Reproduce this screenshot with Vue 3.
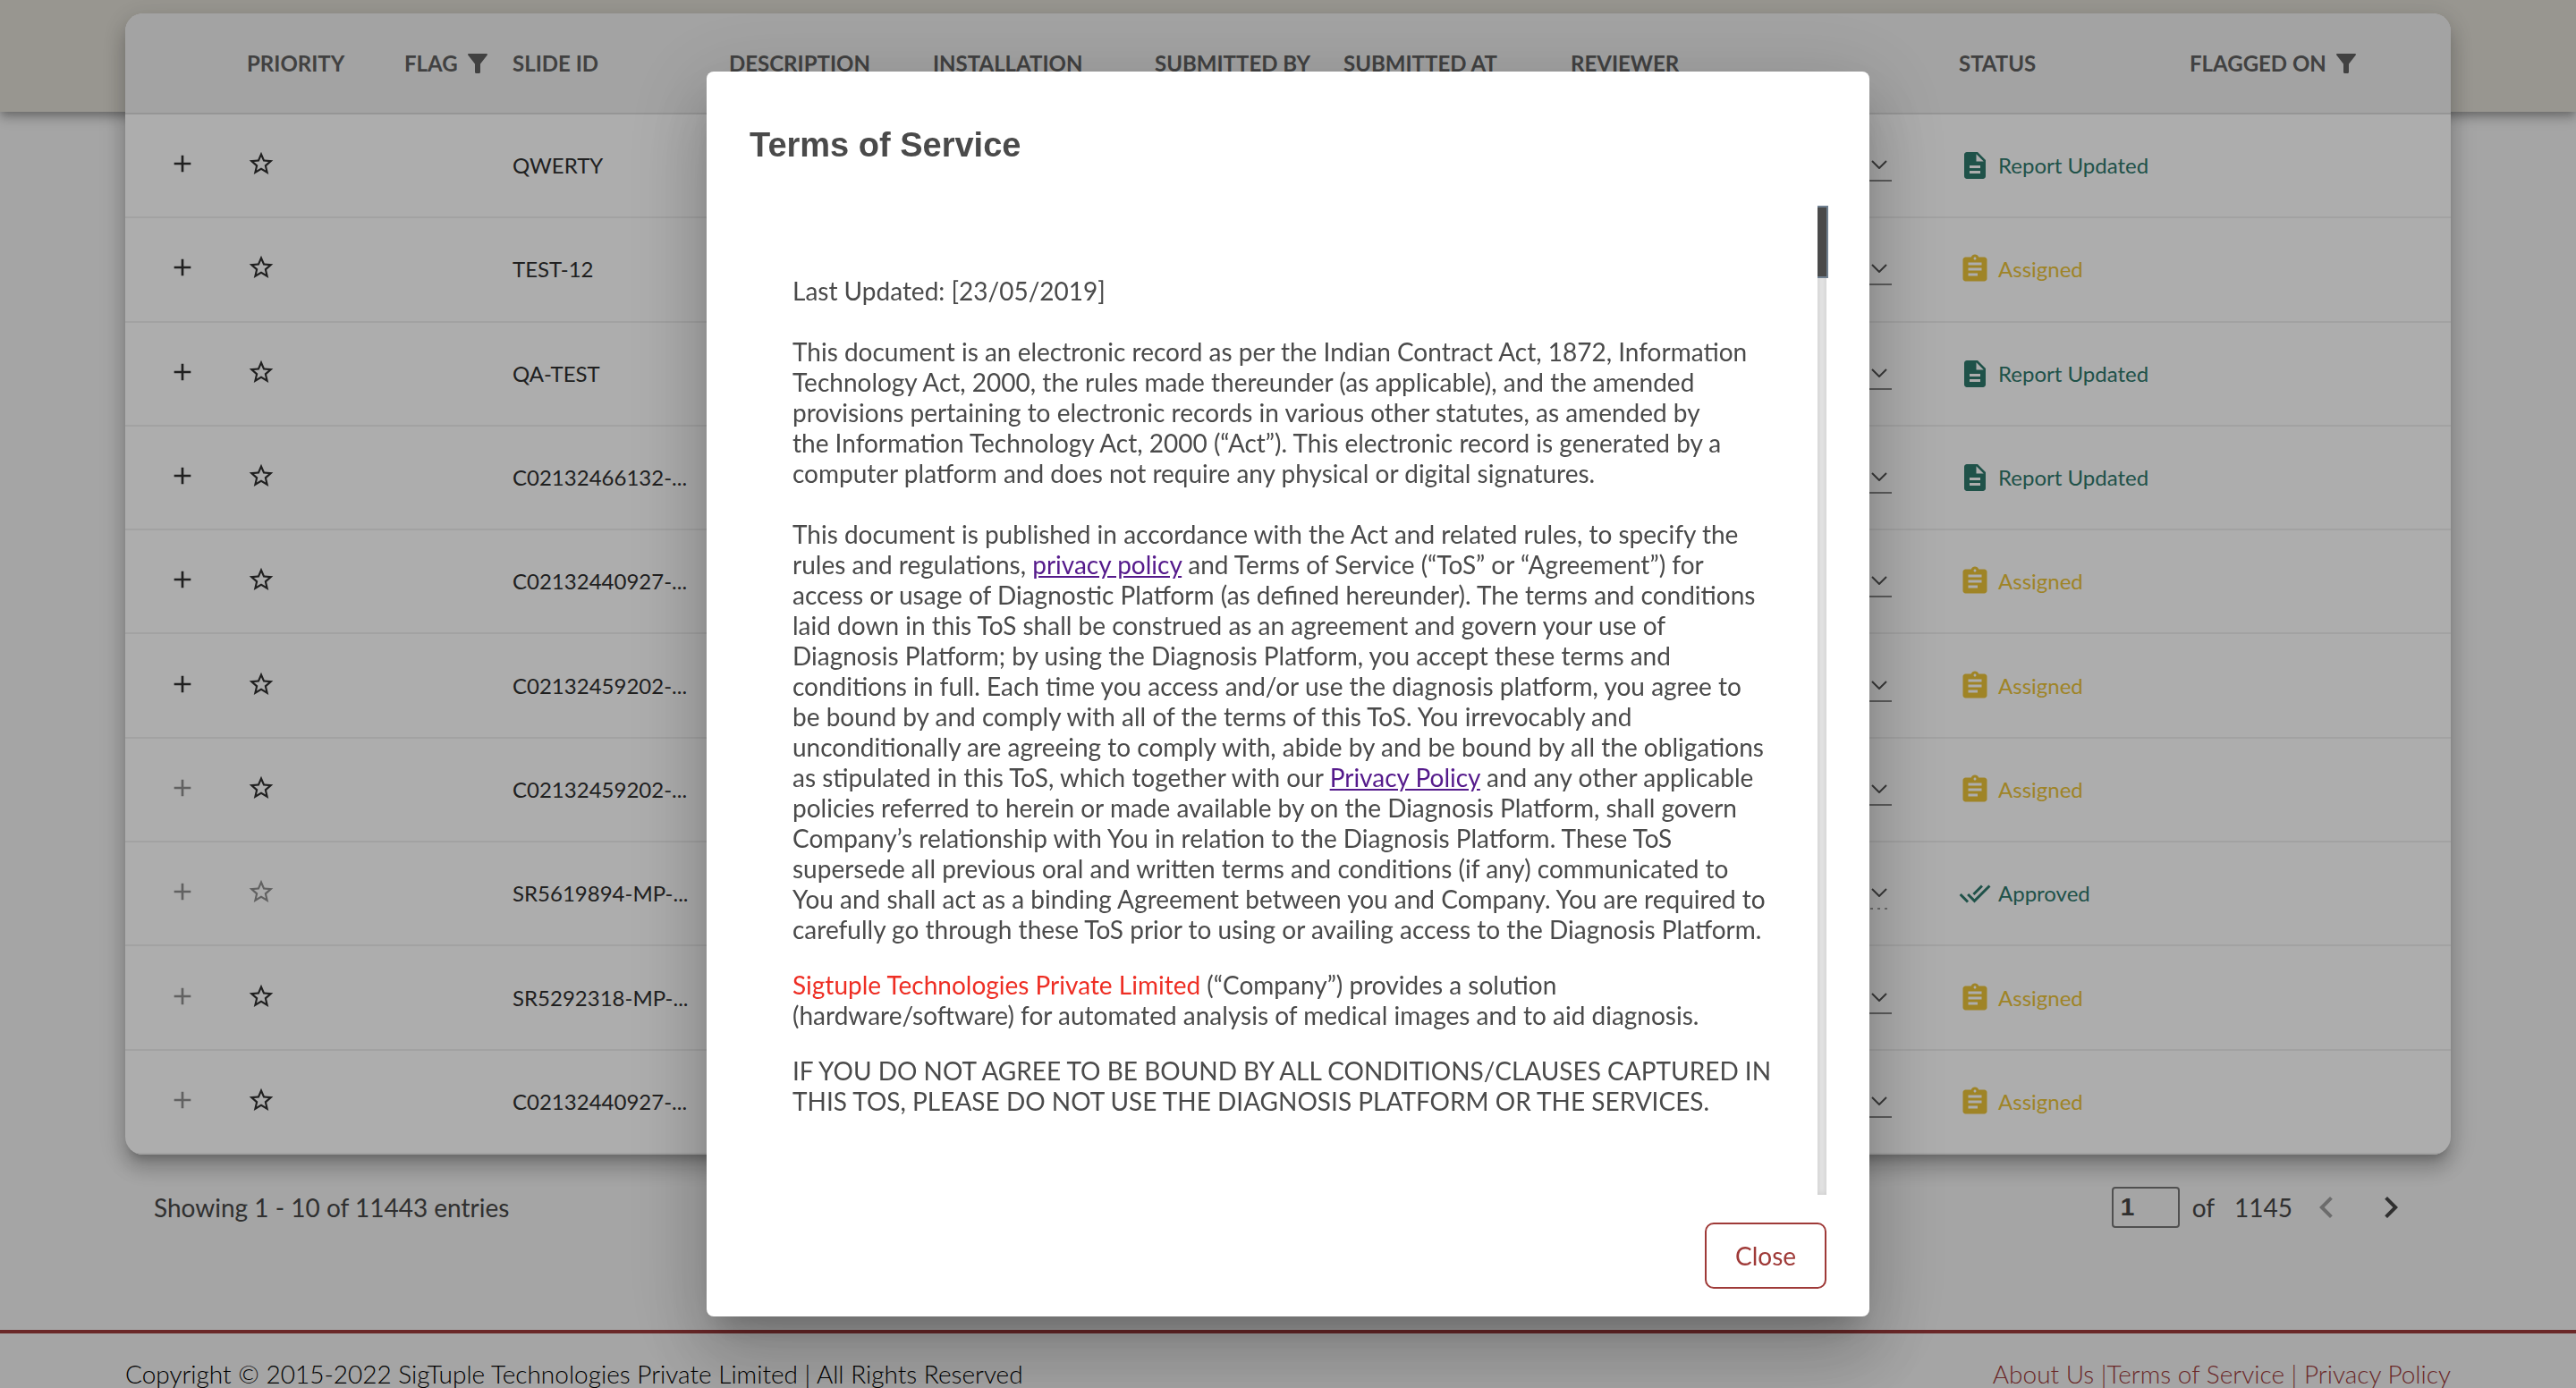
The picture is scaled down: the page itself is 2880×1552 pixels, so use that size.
<script setup>
import { ref } from 'vue'

const page = ref('1')

const icons = {
  filter: 'M2 1h20a1 1 0 0 1 .8 1.600L15 12.500V21.500a1.500 1.500 0 0 1-1.500 1.500h-3A1.500 1.500 0 0 1 9 21.500V12.500L1.200 2.600A1 1 0 0 1 2 1z',
  report: 'M14 2H6c-1.100 0-2 .9-2 2v16c0 1.100.9 2 2 2h12c1.100 0 2-.9 2-2V8l-6-6zm2 16H8v-2h8v2zm0-4H8v-2h8v2zm-3-5V3.500L18.500 9H13z',
  assigned: 'M19 3h-4.180C14.400 1.840 13.300 1 12 1c-1.300 0-2.400.84-2.820 2H5c-1.100 0-2 .9-2 2v14c0 1.100.9 2 2 2h14c1.100 0 2-.9 2-2V5c0-1.100-.9-2-2-2zm-7 0c.55 0 1 .45 1 1s-.45 1-1 1-1-.45-1-1 .45-1 1-1zm2 14H7v-2h7v2zm3-4H7v-2h10v2zm0-4H7V7h10v2z',
  approved: 'M18 7l-1.410-1.410-6.340 6.340 1.410 1.410L18 7zm4.240-1.410L11.660 16.170 7.480 12l-1.410 1.410L11.660 19l12-12-1.420-1.410zM.41 13.410L6 19l1.410-1.410L1.830 12 .41 13.410z',
  star: 'M22 9.240l-7.190-.62L12 2 9.190 8.630 2 9.240l5.460 4.730L5.820 21 12 17.270 18.180 21l-1.630-7.030L22 9.240zM12 15.400l-3.760 2.270 1-4.280-3.320-2.880 4.380-.38L12 6.100l1.710 4.040 4.380.38-3.320 2.880 1 4.280L12 15.400z',
  plus: 'M19 13h-6v6h-2v-6H5v-2h6V5h2v6h6v2z',
  prev: 'M15.410 7.410L14 6l-6 6 6 6 1.410-1.410L10.830 12z',
  next: 'M10 6L8.590 7.410 13.170 12l-4.580 4.590L10 18l6-6z'
}

const columns = [
  { label: '', width: 120 },
  { label: 'PRIORITY', width: 176 },
  { label: 'FLAG', width: 121, filter: true },
  { label: 'SLIDE ID', width: 242 },
  { label: 'DESCRIPTION', width: 228 },
  { label: 'INSTALLATION', width: 248 },
  { label: 'SUBMITTED BY', width: 211 },
  { label: 'SUBMITTED AT', width: 254 },
  { label: 'REVIEWER', width: 434 },
  { label: 'STATUS', width: 258 },
  { label: 'FLAGGED ON', width: 308, filter: true }
]

const labels = { report: 'Report Updated', assigned: 'Assigned', approved: 'Approved' }

const rows = [
  { id: 'QWERTY', status: 'report' },
  { id: 'TEST-12', status: 'assigned' },
  { id: 'QA-TEST', status: 'report' },
  { id: 'C02132466132-...', status: 'report' },
  { id: 'C02132440927-...', status: 'assigned' },
  { id: 'C02132459202-...', status: 'assigned' },
  { id: 'C02132459202-...', status: 'assigned', noExpand: true },
  { id: 'SR5619894-MP-...', status: 'approved', noExpand: true, locked: true },
  { id: 'SR5292318-MP-...', status: 'assigned', noExpand: true },
  { id: 'C02132440927-...', status: 'assigned', noExpand: true }
]
</script>

<template>
  <div class="page">
    <header class="band"></header>
    <main class="main">
      <div class="card">
        <table class="slides">
          <colgroup>
            <col v-for="(c, i) in columns" :key="i" :style="{ width: c.width + 'px' }" />
          </colgroup>
          <thead>
            <tr>
              <th v-for="(c, i) in columns" :key="i" scope="col">
                <span class="head">
                  {{ c.label }}
                  <svg v-if="c.filter" class="filter" viewBox="0 0 24 24"><path :d="icons.filter" /></svg>
                </span>
              </th>
            </tr>
          </thead>
          <tbody>
            <tr v-for="(r, i) in rows" :key="i">
              <td class="expand">
                <button class="icon-btn" :disabled="r.noExpand" aria-label="Expand row">
                  <svg viewBox="0 0 24 24"><path :d="icons.plus" /></svg>
                </button>
              </td>
              <td>
                <button class="icon-btn" :disabled="r.locked" aria-label="Toggle priority">
                  <svg viewBox="0 0 24 24"><path :d="icons.star" /></svg>
                </button>
              </td>
              <td></td>
              <td>{{ r.id }}</td>
              <td></td>
              <td></td>
              <td></td>
              <td></td>
              <td>
                <div class="picker" :class="{ locked: r.locked }">
                  <select :disabled="r.locked" aria-label="Reviewer"><option></option></select>
                  <svg class="caret" viewBox="0 0 18 10"><path d="M1 1l8 8 8-8" /></svg>
                </div>
              </td>
              <td>
                <span class="status" :class="r.status">
                  <svg viewBox="0 0 24 24"><path :d="icons[r.status]" /></svg>
                  {{ labels[r.status] }}
                </span>
              </td>
              <td></td>
            </tr>
          </tbody>
        </table>
      </div>
      <div class="pager">
        <span>Showing 1 - 10 of 11443 entries</span>
        <div class="pages">
          <input v-model="page" class="page-input" type="text" aria-label="Page number" />
          <div class="total">
            <span>of</span>
            <span>1145</span>
          </div>
          <div class="arrows">
            <button class="arrow" disabled aria-label="Previous page">
              <svg viewBox="0 0 24 24"><path :d="icons.prev" /></svg>
            </button>
            <button class="arrow" aria-label="Next page">
              <svg viewBox="0 0 24 24"><path :d="icons.next" /></svg>
            </button>
          </div>
        </div>
      </div>
    </main>
    <footer class="footer">
      <span>Copyright © 2015-2022 SigTuple Technologies Private Limited | All Rights Reserved</span>
      <nav class="links"><a href="#about">About Us</a> |<a href="#terms">Terms of Service</a> | <a href="#privacy">Privacy Policy</a></nav>
    </footer>
  </div>

  <div class="backdrop">
    <section class="dialog" role="dialog" aria-modal="true" aria-labelledby="terms-title">
      <h2 id="terms-title" class="title">Terms of Service</h2>
      <div class="content">
        <div class="terms">
          <p>Last Updated: [23/05/2019]<br /><br />This document is an electronic record as per the Indian Contract Act, 1872, Information Technology Act, 2000, the rules made thereunder (as applicable), and the amended provisions pertaining to electronic records in various other statutes, as amended by the&nbsp;Information Technology Act, 2000 (“Act”). This electronic record is generated by a computer platform and does not require any physical or digital signatures.<br /><br />This document is published in accordance with the Act and related rules, to specify the rules and regulations, <a href="#privacy">privacy policy</a> and Terms of Service (“ToS” or “Agreement”) for access or usage of Diagnostic Platform (as defined hereunder). The terms and conditions laid down in this ToS shall be construed as an agreement and govern your use of Diagnosis Platform; by using the Diagnosis Platform, you accept these terms and conditions in full. Each time you access and/or use the diagnosis platform, you agree to be bound by and comply with all of the terms of this ToS. You irrevocably and unconditionally are agreeing to comply with, abide by and be bound by all the obligations as stipulated in this ToS, which together with our <a href="#privacy">Privacy Policy</a> and any other applicable policies referred to herein or made available by on the Diagnosis Platform, shall govern Company’s relationship with You in relation to the Diagnosis Platform. These ToS supersede all previous oral and written terms and conditions (if any) communicated to You and shall act as a binding Agreement between you and Company. You are required to carefully go through these ToS prior to using or availing access to the Diagnosis Platform.</p>
          <p><span class="company">Sigtuple Technologies Private Limited</span> (“Company”) provides a solution (hardware/software) for automated analysis of medical images and to aid diagnosis.</p>
          <p>IF YOU DO NOT AGREE TO BE BOUND BY ALL CONDITIONS/CLAUSES CAPTURED IN THIS TOS, PLEASE DO NOT USE THE DIAGNOSIS PLATFORM OR THE SERVICES.</p>
        </div>
        <div class="track"><div class="thumb"></div></div>
      </div>
      <div class="actions">
        <button class="close">Close</button>
      </div>
    </section>
  </div>
</template>

<style>
html,
body {
  overflow: hidden;
  background: #f3f3f3;
}
</style>

<style scoped>
* {
  box-sizing: border-box;
}

.page,
.backdrop {
  font-family: Lato, "Liberation Sans", sans-serif;
}

button,
input,
select {
  font: inherit;
  color: inherit;
  background: none;
  border: 0;
  padding: 0;
  margin: 0;
}

svg {
  display: block;
  fill: currentColor;
}

.page {
  height: 100vh;
  overflow: hidden;
}

.band {
  height: 125px;
  background: #e1ded5;
  box-shadow: 0 4px 8px -2px rgba(0, 0, 0, 0.2), 0 8px 10px rgba(0, 0, 0, 0.14), 0 2px 20px rgba(0, 0, 0, 0.12);
}

.main {
  margin: -110px 140px 0;
}

.card {
  position: relative;
  border-radius: 20px;
  overflow: hidden;
  background: #fff;
  box-shadow: 0 10px 10px -6px rgba(0, 0, 0, 0.2), 0 16px 20px 2px rgba(0, 0, 0, 0.14), 0 6px 28px 4px rgba(0, 0, 0, 0.12);
}

.slides {
  width: 100%;
  height: 1276px;
  table-layout: fixed;
  border-collapse: collapse;
  font-size: 24px;
  line-height: 28px;
  color: #303030;
}

th,
td {
  padding: 0 0 0 16px;
  text-align: left;
  white-space: nowrap;
  border-bottom: 2px solid #efefef;
}

th {
  height: 112px;
  background: #f0f0f0;
  border-bottom-color: #dcdcdc;
  color: #606060;
  font-weight: 700;
}

.head,
.status {
  display: flex;
  align-items: center;
}

.head {
  gap: 10px;
}

.filter {
  width: 24px;
  height: 24px;
}

.expand {
  padding-left: 48px;
}

.icon-btn {
  display: block;
  margin-bottom: 4px;
}

.icon-btn svg {
  width: 32px;
  height: 32px;
}

.icon-btn:disabled {
  color: #909090;
}

.picker {
  position: relative;
  width: 359px;
  margin-bottom: 2px;
}

.picker select {
  display: block;
  width: 100%;
  height: 38px;
  appearance: none;
  border-bottom: 2px solid #888;
  border-radius: 0;
}

.picker.locked select {
  width: 354px;
  border-bottom-color: transparent;
  background: linear-gradient(to right, #777 3px, transparent 3px) 7px bottom / 8px 2px repeat-x border-box;
}

.caret {
  position: absolute;
  right: 5px;
  top: 14px;
  width: 18px;
  height: 10px;
  fill: none;
  stroke: #555;
  stroke-width: 2;
}

.status {
  gap: 8px;
}

.status svg {
  width: 36px;
  height: 36px;
}

.status.report,
.status.approved {
  color: #2f796c;
}

.status.assigned {
  color: #ebc338;
}

.pager {
  display: flex;
  justify-content: space-between;
  align-items: center;
  height: 118px;
  padding: 0 43px 0 32px;
  font-size: 28px;
  line-height: 34px;
  color: #484848;
}

.pages {
  display: flex;
  align-items: center;
  gap: 14px;
}

.total {
  display: flex;
  gap: 22px;
}

.page-input {
  width: 76px;
  height: 46px;
  padding: 0 8px;
  border: 2px solid #767676;
  border-radius: 4px;
  font: 700 28px "Liberation Sans", sans-serif;
}

.arrows {
  display: flex;
  gap: 24px;
}

.arrow svg {
  width: 48px;
  height: 48px;
}

.arrow:disabled {
  color: #a0a0a0;
}

.footer {
  display: flex;
  justify-content: space-between;
  margin-top: 78px;
  padding: 28px 140px;
  border-top: 4px solid #9d3b3c;
  font-size: 28px;
  font-weight: 300;
  line-height: 34px;
  color: #000;
}

.links,
.links a {
  color: #9d3b3c;
  text-decoration: none;
}

.backdrop {
  position: fixed;
  inset: 0;
  display: flex;
  align-items: center;
  justify-content: center;
  background: rgba(0, 0, 0, 0.32);
}

.dialog {
  display: flex;
  flex-direction: column;
  width: 1300px;
  max-width: calc(100% - 128px);
  max-height: calc(100% - 160px);
  padding: 0 48px;
  border-radius: 8px;
  background: #fff;
  color: #4a4a4a;
  box-shadow: 0 22px 30px -14px rgba(0, 0, 0, 0.2), 0 48px 76px 6px rgba(0, 0, 0, 0.14), 0 18px 92px 16px rgba(0, 0, 0, 0.12);
}

.title {
  margin: 0;
  padding: 58px 0 44px;
  font: 700 38px/48px "Liberation Sans", sans-serif;
}

.content {
  display: flex;
  justify-content: space-between;
  min-height: 0;
}

.terms {
  width: 1144px;
  height: 1106px;
  padding: 50px 0 0 48px;
  overflow: hidden;
  font-size: 28px;
  line-height: 34px;
}

.terms p {
  margin: 28px 0 0;
}

.terms a {
  color: #551a8b;
}

.company {
  color: #ee2e24;
}

.track {
  flex: none;
  width: 10px;
  background: #e4e4e4;
  box-shadow: inset 0 0 6px rgba(0, 0, 0, 0.12);
}

.thumb {
  width: 12px;
  height: 81px;
  background: #4a4a4a;
  border: 2px solid #708090;
  border-left: 0;
}

.actions {
  display: flex;
  justify-content: flex-end;
  padding: 31px 0;
}

.close {
  width: 136px;
  height: 74px;
  border: 2px solid #9f3a38;
  border-radius: 10px;
  font-size: 28px;
  color: #9f3a38;
}
</style>
